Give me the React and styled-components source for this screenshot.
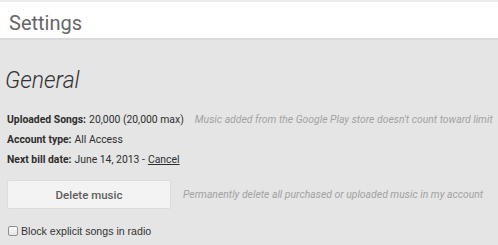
import React from 'react';
import styled, { createGlobalStyle } from 'styled-components';

const GlobalStyle = createGlobalStyle`
    html, body {
        margin : 0;
        padding : 0;
        background : #e5e5e5;
    }
    body {
        font-family : Roboto, "Liberation Sans", Arial, sans-serif;
        color : #333;
    }
`;

const Page = styled.div`
    width : 498px;
    height : 245px;
    overflow : hidden;
    background : #e5e5e5;
    border-top : 2px solid #ececec;
    box-sizing : border-box;
`;

const Header = styled.header`
    height : 38px;
    background : #fff;
    border-bottom : 2px solid #d9d9d9;
    padding : 11px 0 0 9px;
    box-sizing : border-box;
`;

const HeaderTitle = styled.h1`
    margin : 0;
    font-size : 20px;
    line-height : 20px;
    font-weight : 400;
    color : #666;
`;

const Body = styled.main`
    padding : 29px 0 0 5px;
`;

const SectionTitle = styled.h2`
    margin : 0 0 17px;
    font-size : 23px;
    line-height : 24px;
    font-weight : 300;
    font-style : italic;
    color : #333;
`;

const InfoList = styled.div`
    display : flex;
    flex-direction : column;
    padding-left : 2px;
`;

const InfoLine = styled.div`
    display : flex;
    align-items : baseline;
    height : 20px;
    line-height : 20px;
    font-size : 10.4px;
    color : #2e2e2e;
    white-space : nowrap;
`;

const Label = styled.b`
    font-weight : 700;
    margin-right : 3px;
`;

const Hint = styled.span`
    font-style : italic;
    color : #a2a2a2;
    font-size : 10.4px;
    margin-left : ${ props => props.gap || 0 }px;
    white-space : nowrap;
`;

const CancelLink = styled.a`
    color : #2e2e2e;
    text-decoration : underline;
    margin-left : 3px;
    cursor : pointer;
`;

const ActionRow = styled.div`
    display : flex;
    align-items : center;
    margin-top : 10px;
    padding-left : 2px;
`;

const Button = styled.button`
    width : 164px;
    height : 29px;
    margin : 0 12px 0 0;
    background : #f3f3f3;
    border : 1px solid #dcdcdc;
    border-radius : 2px;
    font-family : Roboto, "Liberation Sans", Arial, sans-serif;
    font-size : 11.5px;
    font-weight : 500;
    color : #5e5e5e;
    cursor : pointer;
`;

const CheckRow = styled.label`
    display : flex;
    align-items : center;
    margin-top : 16px;
    padding-left : 3px;
    font-family : "Liberation Sans", Arial, sans-serif;
    font-size : 10.6px;
    color : #333;
`;

const Box = styled.span`
    width : 8px;
    height : 8px;
    border : 1px solid #8f8f8f;
    border-radius : 2px;
    background : linear-gradient(#fdfdfd, #e4e4e4);
    margin-right : 3px;
    flex : none;
`;

const App = () => (
    <>
        <GlobalStyle />
        <Page>
            <Header>
                <HeaderTitle>Settings</HeaderTitle>
            </Header>
            <Body>
                <SectionTitle>General</SectionTitle>
                <InfoList>
                    <InfoLine>
                        <Label>Uploaded Songs:</Label>20,000 (20,000 max)
                        <Hint gap={ 11 }>Music added from the Google Play store doesn't count toward limit</Hint>
                    </InfoLine>
                    <InfoLine>
                        <Label>Account type:</Label>All Access
                    </InfoLine>
                    <InfoLine>
                        <Label>Next bill date:</Label>June 14, 2013 -<CancelLink>Cancel</CancelLink>
                    </InfoLine>
                </InfoList>
                <ActionRow>
                    <Button>Delete music</Button>
                    <Hint>Permanently delete all purchased or uploaded music in my account</Hint>
                </ActionRow>
                <CheckRow>
                    <Box />
                    Block explicit songs in radio
                </CheckRow>
            </Body>
        </Page>
    </>
);

export default App;
